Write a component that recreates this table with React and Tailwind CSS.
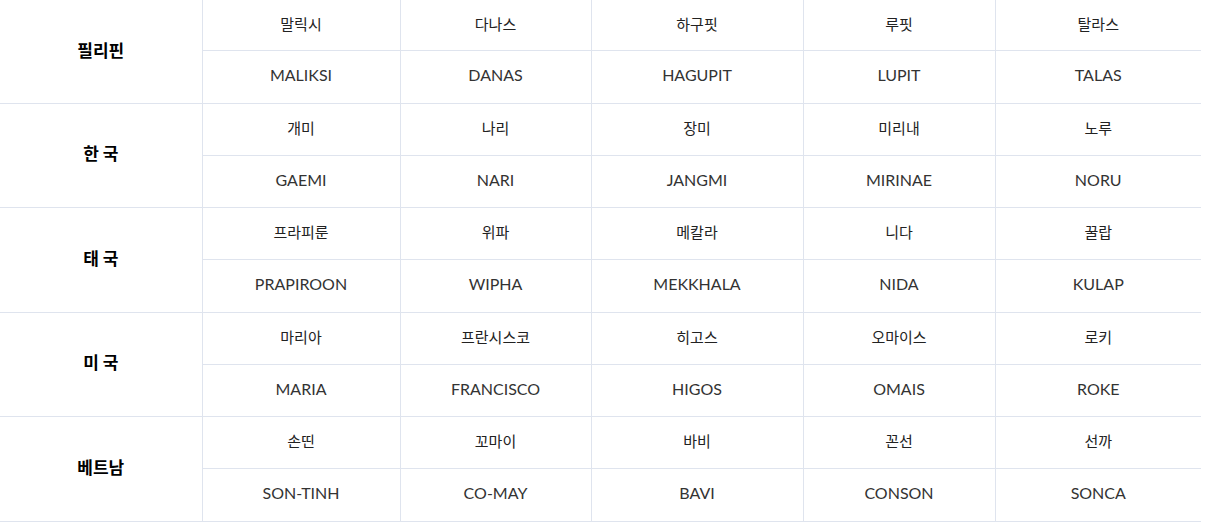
const data = [
  {
    country: "필리핀",
    ko: ["말릭시", "다나스", "하구핏", "루핏", "탈라스"],
    en: ["MALIKSI", "DANAS", "HAGUPIT", "LUPIT", "TALAS"],
  },
  {
    country: "한 국",
    ko: ["개미", "나리", "장미", "미리내", "노루"],
    en: ["GAEMI", "NARI", "JANGMI", "MIRINAE", "NORU"],
  },
  {
    country: "태 국",
    ko: ["프라피룬", "위파", "메칼라", "니다", "꿀랍"],
    en: ["PRAPIROON", "WIPHA", "MEKKHALA", "NIDA", "KULAP"],
  },
  {
    country: "미 국",
    ko: ["마리아", "프란시스코", "히고스", "오마이스", "로키"],
    en: ["MARIA", "FRANCISCO", "HIGOS", "OMAIS", "ROKE"],
  },
  {
    country: "베트남",
    ko: ["손띤", "꼬마이", "바비", "꼰선", "선까"],
    en: ["SON-TINH", "CO-MAY", "BAVI", "CONSON", "SONCA"],
  },
];

const cols = ["w-[198px]", "w-[191px]", "w-[212px]", "w-[192px]", "w-[206px]"];

// row heights so the lines land where the picture has them
const heights = [
  ["h-[50px]", "h-[53px]"],
  ["h-[52px]", "h-[52px]"],
  ["h-[52px]", "h-[53px]"],
  ["h-[52px]", "h-[52px]"],
  ["h-[52px]", "h-[53px]"],
];

function App() {
  return (
    <div className="w-[1205px] h-[522px] bg-white font-['Lato','Noto_Sans_CJK_KR',sans-serif]">
      <table className="w-[1201px] border-collapse table-fixed">
        <colgroup>
          <col className="w-[202px]" />
          {cols.map((c, i) => (
            <col key={i} className={c} />
          ))}
        </colgroup>
        <tbody>
          {data.map((g, gi) => (
            <>
              <tr key={g.country + "1"} className={heights[gi][0]}>
                <th
                  rowSpan={2}
                  className="border-b border-r border-[#dfe4ee] pb-[4px] text-[17px] font-bold text-black font-['Noto_Sans_CJK_KR',sans-serif]"
                >
                  {g.country}
                </th>
                {g.ko.map((k, i) => (
                  <td
                    key={i}
                    className={`border-b border-[#dfe4ee] text-center text-[15px] text-[#222] pb-[1px] font-['Noto_Sans_CJK_KR',sans-serif] ${
                      i < 4 ? "border-r" : ""
                    }`}
                  >
                    {k}
                  </td>
                ))}
              </tr>
              <tr key={g.country + "2"} className={heights[gi][1]}>
                {g.en.map((e, i) => (
                  <td
                    key={i}
                    className={`border-b border-[#dfe4ee] text-center text-[16px] pb-[3px] text-[#333] ${
                      i < 4 ? "border-r" : ""
                    }`}
                  >
                    {e}
                  </td>
                ))}
              </tr>
            </>
          ))}
        </tbody>
      </table>
    </div>
  );
}

export default App;
